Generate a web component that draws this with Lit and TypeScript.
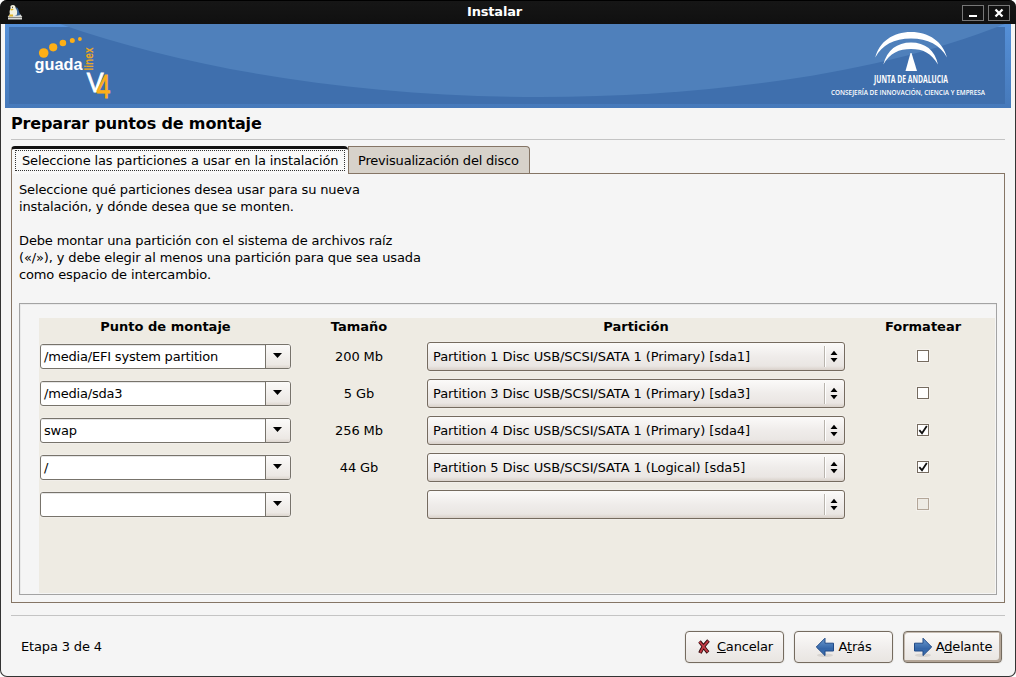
import { LitElement, html, css, svg } from "lit";
import { customElement, property } from "lit/decorators.js";

interface Row {
  mount: string;
  size: string;
  part: string;
  format: "on" | "off" | "disabled";
}

const ROWS: Row[] = [
  { mount: "/media/EFI system partition", size: "200 Mb", part: "Partition 1 Disc USB/SCSI/SATA 1 (Primary) [sda1]", format: "off" },
  { mount: "/media/sda3", size: "5 Gb", part: "Partition 3 Disc USB/SCSI/SATA 1 (Primary) [sda3]", format: "off" },
  { mount: "swap", size: "256 Mb", part: "Partition 4 Disc USB/SCSI/SATA 1 (Primary) [sda4]", format: "on" },
  { mount: "/", size: "44 Gb", part: "Partition 5 Disc USB/SCSI/SATA 1 (Logical) [sda5]", format: "on" },
  { mount: "", size: "", part: "", format: "disabled" },
];

@customElement("title-bar")
class TitleBar extends LitElement {
  static styles = css`
    :host { display: flex; align-items: center; height: 24px; box-sizing: border-box; padding: 0 6px 0 7px;
      background: linear-gradient(#161616, #101010); border-top: 1px solid #000; color: #fff; }
    .title { flex: 1; text-align: center; font-weight: bold; font-size: 13px; line-height: 20px; padding: 0 0 2px 4px;
      letter-spacing: -0.2px; }
    .buttons { display: flex; gap: 4px; }
    svg { display: block; }
  `;
  render() {
    return html`
      <svg width="16" height="17" viewBox="0 0 16 17">
        <path d="M1 12.5 3 10h10l2 2.500V15.500H1z" fill="#dcdcd8" />
        <path d="M1 13.500h14" stroke="#8b8b86" />
        <path d="M7.500 3.500c3.500-1 4 2.500 5 5.500l1 2-5 1z" fill="#3a6496" />
        <path d="M3.500 2c2-2 5.500-1 5 2C10.500 6 10.500 9 9.500 11.500H3.500C2 9 2.500 6 3.500 4.500z" fill="#f4f2df" />
        <path d="M3 5.200 6 4.500 6.500 6 4 6.500zM2.500 10.500h3.500v2H2z" fill="#e0b52c" />
        <path d="M5 2.800h1v1H5z" fill="#222" />
      </svg>
      <div class="title">Instalar</div>
      <div class="buttons">
        <svg width="22" height="16" viewBox="0 0 22 16">
          <rect x=".5" y=".5" width="21" height="15" fill="#111" stroke="#777" />
          <path d="M7 10h8v2H7z" fill="#fff" />
        </svg>
        <svg width="22" height="16" viewBox="0 0 22 16">
          <rect x=".5" y=".5" width="21" height="15" fill="#111" stroke="#777" />
          <path d="M7.500 4.500l7 7M14.500 4.500l-7 7" stroke="#fff" stroke-width="2.300" />
        </svg>
      </div>`;
  }
}

@customElement("brand-banner")
class BrandBanner extends LitElement {
  static styles = css`
    :host { display: block; height: 84px; }
    svg { display: block; }
    .guada { font: bold 17px "Liberation Sans", sans-serif; }
    .linex { font: bold 12px "Liberation Sans", sans-serif; }
    .vee { font: 28px "Liberation Sans", sans-serif; }
    .four { font-size: 34px; }
    .junta { font: bold 10px "Open Sans", sans-serif; }
    .dept { font: 600 7.500px "Open Sans", sans-serif; }
  `;
  render() {
    return html`
      <svg width="1006" height="84" viewBox="5 24 1006 84">
        <defs>
          <linearGradient id="edge" x1="0" y1="0" x2="0" y2="1">
            <stop offset="0" stop-color="#5590d8" /><stop offset="1" stop-color="#4679ba" />
          </linearGradient>
        </defs>
        <rect x="5" y="24" width="1006" height="84" fill="url(#edge)" />
        <rect x="9" y="27" width="996" height="77" fill="#3f6fad" />
        <path d="M60 24C200 73 370 97 540 97S880 74 1005 24z" fill="#4f80bb" />
        <g fill="#fdaf17">
          <circle cx="43.700" cy="53" r="4.800" /><circle cx="53.200" cy="47.300" r="4.100" />
          <circle cx="62.900" cy="43" r="3.300" /><circle cx="72.300" cy="40.500" r="2.500" />
          <circle cx="79.900" cy="39" r="1.900" />
        </g>
        <text class="guada" x="34.500" y="70" fill="#fff" textLength="48" lengthAdjust="spacingAndGlyphs">guada</text>
        <text class="linex" transform="translate(93 70.500) rotate(-90)" fill="#eda820" textLength="23" lengthAdjust="spacingAndGlyphs">linex</text>
        <g transform="translate(86.800 0) scale(.9 1)">
          <text class="vee" x="0" y="92" fill="#fff" stroke="#fff" stroke-width=".8">V<tspan class="four" dx="-8" dy="6" fill="#fdaf17" stroke="#fdaf17" textLength="15.500" lengthAdjust="spacingAndGlyphs">4</tspan></text>
        </g>
        <g fill="#fff">
          <path d="M875.300 57.500C879 42 893 32 911 32s32 10 36 25.500C940 45 928 38.500 911 38.500S882 45 875.300 57.500z" />
          <path d="M883.300 64.500C887 50 897 42.500 911 42.500s24 7.500 27 22C931 53 923 49 911 49s-21 4-27.700 15.500z" />
          <path d="M910.500 53h1L917 71H905.500z" />
          <text class="junta" x="874" y="82.700" textLength="74" lengthAdjust="spacingAndGlyphs">JUNTA DE ANDALUCIA</text>
          <text class="dept" x="831" y="95" textLength="154" lengthAdjust="spacingAndGlyphs">CONSEJERÍA DE INNOVACIÓN, CIENCIA Y EMPRESA</text>
        </g>
      </svg>`;
  }
}

@customElement("mount-row")
class MountRow extends LitElement {
  @property({ attribute: false }) row!: Row;
  static styles = css`
    :host { display: grid; grid-template-columns: 251px 136px 418px 156px; height: 37px; align-items: center; white-space: nowrap; }
    .combo { display: flex; height: 25px; box-sizing: border-box; border: 1px solid #77736b; border-radius: 3px;
      background: #fff; overflow: hidden; line-height: 23px; box-shadow: 0 0 0 1px #f1eee9; }
    .value { flex: 1; padding-left: 3px; box-shadow: inset 0 1px #e6e6e6; letter-spacing: -0.19px; }
    .arrow { width: 24px; border-left: 1px solid #77736b; background: linear-gradient(#fbfaf9, #ece8e4 85%, #ddd6cf); }
    .size { text-align: center; letter-spacing: -0.1px; }
    .select { display: flex; height: 29px; box-sizing: border-box; border: 1px solid #756b5f; border-radius: 3px;
      line-height: 27px; padding-left: 5px; background: linear-gradient(#fbfaf9, #efecea 50%, #eae6e3 85%, #d9d1ca);
      box-shadow: 0 0 0 1px #f1eee9; }
    .part { flex: 1; letter-spacing: -0.1px; }
    .spin { width: 19px; height: 21px; margin-top: 3px; border-left: 1px solid #b9b4ad; box-shadow: inset 1px 0 #fff; }
    .check { display: flex; justify-self: center; width: 12px; height: 12px; margin-bottom: 1px; box-sizing: border-box;
      border: 1px solid #756b5f; background: #fff; box-shadow: 0 0 0 1px #f4f1ec; }
    .disabled { border-color: #b3a698; background: #eeebe4; }
    svg { display: block; }
  `;
  render() {
    const r = this.row;
    return html`
      <div class="combo">
        <span class="value">${r.mount}</span>
        <span class="arrow"><svg width="24" height="23"><path d="M7 8h9l-4.500 5z" fill="#000" /></svg></span>
      </div>
      <span class="size">${r.size}</span>
      <div class="select">
        <span class="part">${r.part}</span>
        <span class="spin"><svg width="18" height="21"><path d="M5.500 9h7L9 4.800zM5.500 12h7L9 16.200z" fill="#000" /></svg></span>
      </div>
      <span class="check ${r.format === "disabled" ? "disabled" : ""}">
        ${r.format === "on"
          ? html`<svg width="10" height="10"><path d="M1.300 5.200 4 8.200 8.800 1" fill="none" stroke="#111" stroke-width="1.800" /></svg>`
          : ""}
      </span>`;
  }
}

const arrow = (flip: boolean) => svg`
  <ellipse cx="10" cy="18.300" rx="8" ry="1.800" fill="#d8d4d0" />
  <path transform=${flip ? "translate(20 0) scale(-1 1)" : ""} d="M1.500 6.200H10V1.200L18.700 10 10 18.600V14H1.500z"
    fill="url(#blue)" stroke="#204a87" stroke-linejoin="round" />
  <defs><linearGradient id="blue" x1="0" y1="0" x2="0" y2="1">
    <stop offset="0" stop-color="#6b9bd0" /><stop offset=".6" stop-color="#3566a8" /><stop offset="1" stop-color="#3a6fb0" />
  </linearGradient></defs>`;

@customElement("app-root")
class AppRoot extends LitElement {
  static styles = css`
    :host { display: block; background: #fff; font-family: "DejaVu Sans", sans-serif; font-size: 13px; color: #000; }
    .window { display: flex; flex-direction: column; width: 1016px; height: 677px; box-sizing: border-box;
      background: #f5f5f5; border-radius: 7px; overflow: hidden; box-shadow: inset 0 0 0 1px #333; }
    brand-banner { margin: 0 5px; }
    .body { display: flex; flex-direction: column; padding: 0 11px; }
    .heading { margin: 0; font-size: 16px; line-height: 31px; height: 31px; font-weight: bold; letter-spacing: -0.15px; }
    .rule { height: 1px; background: #c4c4c4; }
    .tabs { display: flex; margin-top: 6px; height: 27px; }
    .tab { box-sizing: border-box; white-space: nowrap; }
    .active { width: 337px; height: 28px; border-top: 3px solid #111; border-left: 1px solid #857565;
      border-radius: 4px 4px 0 0; padding: 1px 3px 0; background: #f9f9f9; z-index: 1; letter-spacing: -0.14px; }
    .focus { border: 1px dotted #333; height: 19px; line-height: 19px; padding-left: 6px; }
    .other { width: 182px; border: 1px solid #857565; border-bottom: 0; border-radius: 0 4px 0 0;
      background: #d7d2ca; padding-left: 9px; line-height: 27px; letter-spacing: -0.19px; }
    .page { box-sizing: border-box; height: 430px; border: 1px solid #857565; padding: 7px; width: 994px;
      display: flex; flex-direction: column; }
    .intro { margin: 0; line-height: 17px; height: 122px; white-space: pre-line; letter-spacing: -0.13px; }
    .frame { box-sizing: border-box; height: 292px; border: 1px solid #a3a3a3; padding: 14px 1px 1px 19px;
      box-shadow: inset 1px 1px #eaeaea; }
    .table { height: 275px; background: #eeebe3; padding-left: 1px; box-sizing: border-box; overflow: hidden; }
    .head { display: grid; grid-template-columns: 251px 136px 418px 156px; height: 20px; line-height: 17px;
      font-weight: bold; text-align: center; }
    .foot-rule { margin-top: 12px; }
    .footer { display: flex; align-items: center; padding: 15px 3px 0 10px; }
    .step { flex: 1; padding-bottom: 2px; letter-spacing: -0.15px; }
    .buttons { display: flex; gap: 10px; }
    .button { display: flex; align-items: center; justify-content: center; gap: 3px; width: 99px; height: 32px;
      box-sizing: border-box; border: 1px solid #756b5f; border-radius: 4px; letter-spacing: -0.15px;
      background: linear-gradient(#fbfaf9, #efecea 60%, #e9e5e1); box-shadow: 0 0 0 1px #ececea; }
    .label { padding-bottom: 2px; }
    .cancel { gap: 5px; }
    .default { box-shadow: inset 1px 1px #c5bbb0, inset -2px -2px #b3a597, 0 0 0 1px #ececea; }
    svg { display: block; }
  `;
  render() {
    return html`
      <div class="window">
        <title-bar></title-bar>
        <brand-banner></brand-banner>
        <div class="body">
          <h1 class="heading">Preparar puntos de montaje</h1>
          <div class="rule"></div>
          <div class="tabs">
            <div class="tab active"><div class="focus">Seleccione las particiones a usar en la instalación</div></div>
            <div class="tab other">Previsualización del disco</div>
          </div>
          <div class="page">
            <p class="intro">Seleccione qué particiones desea usar para su nueva
instalación, y dónde desea que se monten.

Debe montar una partición con el sistema de archivos raíz
(«/»), y debe elegir al menos una partición para que sea usada
como espacio de intercambio.</p>
            <div class="frame">
              <div class="table">
                <div class="head"><span>Punto de montaje</span><span>Tamaño</span><span>Partición</span><span>Formatear</span></div>
                ${ROWS.map((row) => html`<mount-row .row=${row}></mount-row>`)}
              </div>
            </div>
          </div>
          <div class="rule foot-rule"></div>
          <div class="footer">
            <span class="step">Etapa 3 de 4</span>
            <div class="buttons">
              <div class="button cancel">
                <svg width="16" height="20" viewBox="0 0 16 20">
                  <path d="M3.500 4.500C6 7 9 12 12 15.500M12.500 3.500C9 7 6 11 4 16" fill="none" stroke="#2a0808" stroke-width="3.600" />
                  <path d="M3.500 4.700C6 7 9 12 11.800 15.200M12.200 4C9 7 6 11 4.200 15.600" fill="none" stroke="#c03a44" stroke-width="1.900" />
                </svg>
                <span class="label"><u>C</u>ancelar</span>
              </div>
              <div class="button"><svg width="20" height="20">${arrow(true)}</svg><span class="label">A<u>t</u>rás</span></div>
              <div class="button default"><svg width="20" height="20">${arrow(false)}</svg><span class="label">A<u>d</u>elante</span></div>
            </div>
          </div>
        </div>
      </div>`;
  }
}
